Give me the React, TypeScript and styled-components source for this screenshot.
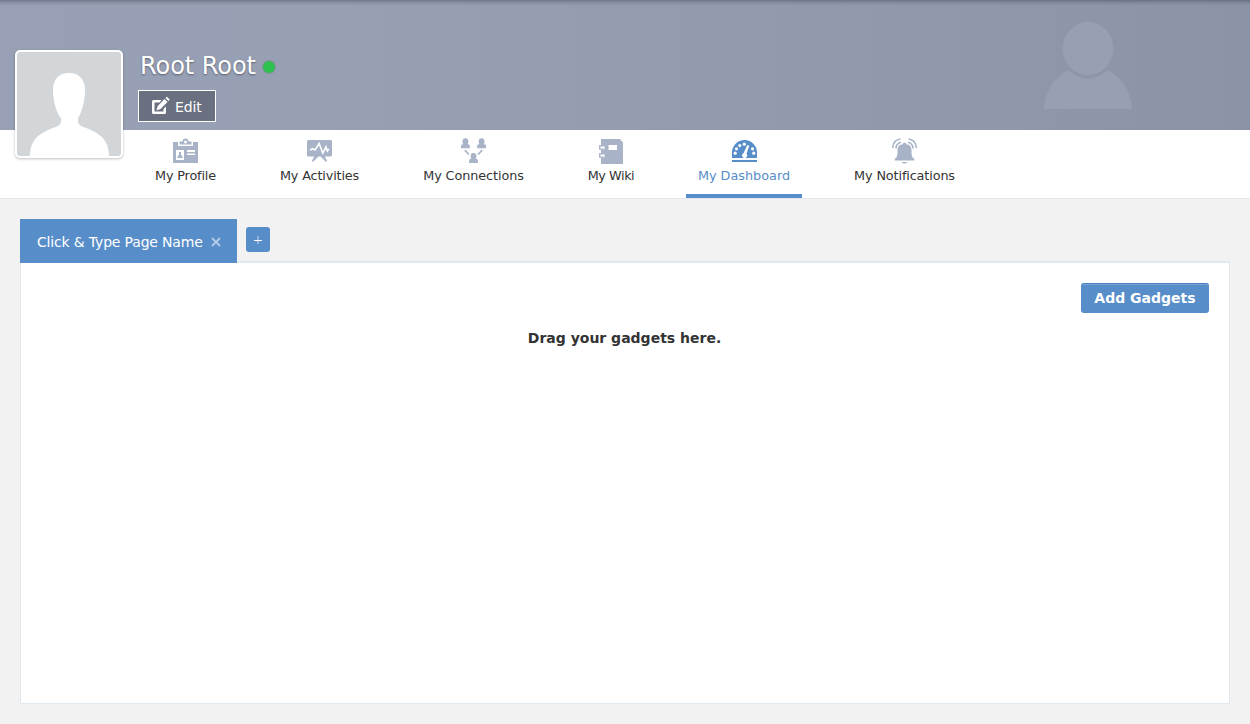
import React from "react";
import styled, { createGlobalStyle } from "styled-components";

const GlobalStyle = createGlobalStyle`
  *, *::before, *::after { box-sizing: border-box; }
  body {
    margin: 0;
    background: #f2f2f2;
    color: #333;
    font-family: "DejaVu Sans", sans-serif;
    font-size: 13px;
  }
`;

const Page = styled.div`
  height: 724px;
  display: flex;
  flex-direction: column;
  overflow: hidden;
`;

const Banner = styled.header`
  position: relative;
  height: 130px;
  flex: none;
  display: flex;
  padding: 50px 0 0 15px;
  background:
    linear-gradient(180deg, rgba(60, 65, 80, 0.42) 0, rgba(60, 65, 80, 0.12) 3px, rgba(60, 65, 80, 0) 6px),
    linear-gradient(90deg, #98a0b6 0%, #979fb3 28%, #9098ac 72%, #8b93a7 100%);
`;

const Watermark = styled.svg`
  position: absolute;
  left: 1043px;
  top: 20px;
`;

const Avatar = styled.div`
  position: relative;
  z-index: 1;
  flex: none;
  width: 108px;
  height: 108px;
  border: 2px solid #fff;
  border-radius: 5px;
  background: #d2d6d9;
  overflow: hidden;
  box-shadow: 0 1px 3px rgba(0, 0, 0, 0.25);
  svg { display: block; }
`;

const Identity = styled.div`
  display: flex;
  flex-direction: column;
  align-items: flex-start;
  margin-left: 15px;
`;

const NameRow = styled.div`
  display: flex;
  align-items: center;
  height: 30px;
  padding: 2px 0 0 2px;
  color: #fff;
  font-size: 24px;
  line-height: 30px;
  letter-spacing: -0.05px;
  text-shadow: 0 1px 2px rgba(0, 0, 0, 0.4);
`;

const Status = styled.span`
  width: 12px;
  height: 12px;
  margin: 1px 0 0 7px;
  border-radius: 50%;
  background: #2fc14e;
  box-shadow: 0 0 2px rgba(0, 0, 0, 0.3);
`;

const EditButton = styled.button`
  display: flex;
  align-items: center;
  width: 78px;
  height: 32px;
  margin-top: 10px;
  padding: 2px 0 0 13px;
  border: 1px solid #fff;
  background: #6a7080;
  color: #fff;
  font: 14px/20px "DejaVu Sans", sans-serif;
  letter-spacing: -0.1px;
  svg { margin: -4px 4px 0 0; }
`;

const Nav = styled.nav`
  flex: none;
  display: flex;
  gap: 40px;
  height: 69px;
  padding-left: 143px;
  background: #fff;
  border-bottom: 1px solid #e1e8ee;
`;

const NavItem = styled.a<{ $active?: boolean; $width: number; $tracking: number }>`
  display: flex;
  flex-direction: column;
  align-items: center;
  width: ${(p) => p.$width}px;
  height: 68px;
  padding-top: 8px;
  border-bottom: 4px solid ${(p) => (p.$active ? "#578dc9" : "transparent")};
  color: ${(p) => (p.$active ? "#578dc9" : "#333")};
  font-size: 12.8px;
  line-height: 20px;
  letter-spacing: ${(p) => p.$tracking}px;
  white-space: nowrap;
  svg {
    display: block;
    flex: none;
    margin: 0 0 2px ${(p) => (p.$width % 2 ? 0 : 1)}px;
    color: ${(p) => (p.$active ? "#578dc9" : "#a8b3c8")};
  }
`;

const Workspace = styled.main`
  flex: 1;
  display: flex;
  flex-direction: column;
  padding: 20px;
`;

const TabBar = styled.div`
  display: flex;
  height: 44px;
  border-bottom: 2px solid #e1e8ee;
`;

const Tab = styled.div`
  display: flex;
  align-items: center;
  width: 217px;
  height: 44px;
  padding: 2px 0 0 17px;
  background: #578dc9;
  color: #fff;
  font-size: 14px;
  letter-spacing: -0.17px;
  white-space: nowrap;
  svg { flex: none; margin-left: 8px; }
`;

const AddTab = styled.button`
  display: flex;
  align-items: center;
  justify-content: center;
  width: 24px;
  height: 25px;
  margin: 8px 0 0 9px;
  padding: 0;
  border: 0;
  border-radius: 3px;
  background: #578dc9;
`;

const Board = styled.section`
  flex: 1;
  display: flex;
  flex-direction: column;
  padding: 20px 20px 0;
  border: 1px solid #e1e8ee;
  border-top: 0;
  background: #fff;
`;

const AddGadgets = styled.button`
  align-self: flex-end;
  width: 128px;
  height: 30px;
  padding: 0 0 1px;
  border: 0;
  border-top: 1px solid #4a82c1;
  border-radius: 3px;
  background: #578dc9;
  box-shadow: inset 0 1px 0 #76a3d5;
  color: #fff;
  font: bold 14px/28px "DejaVu Sans", sans-serif;
`;

const EmptyHint = styled.p`
  margin: 15px 1px 0 0;
  font-size: 14px;
  font-weight: bold;
  line-height: 20px;
  text-align: center;
`;

const Icon = ({ children }: { children: React.ReactNode }) => (
  <svg width="25" height="26" viewBox="0.5 0 25 26" fill="currentColor">{children}</svg>
);

const ProfileIcon = () => (
  <Icon>
    <path d="M0.5 4H5.5V8H20.5V4H25.5V25H0.5Z" />
    <path d="M7 3.5H10A3 3 0 0 1 16 3.5H19V6.5H7Z" />
    <circle cx="13" cy="3.9" r="1.5" fill="#fff" />
    <path d="M3.5 12H11.5V22H3.5ZM14.5 12H22.5V14H14.5ZM14.5 15.5H22.5V17H14.5Z" fill="#fff" />
    <path d="M6.5 14H8.5V17L10 18V20H5V18L6.5 17Z" />
  </Icon>
);

const ActivitiesIcon = () => (
  <Icon>
    <path d="M2 2H24Q25.5 2 25.5 3.5V17.5Q25.5 18.5 24 18.5H18.3L20.5 22.5L19.6 24L14 18.5H12L6.4 24L5.5 22.5L7.7 18.5H2Q0.5 18.5 0.5 17.5V3.5Q0.5 2 2 2Z" />
    <path d="M3.5 12L6 10.7L8.5 12L12.6 5.5L16.3 15L19.5 8.8L20.8 13L22.4 11" fill="none" stroke="#fff" strokeWidth="1.6" />
  </Icon>
);

const Person = ({ x, y }: { x: number; y: number }) => (
  <g transform={`translate(${x} ${y})`}>
    <ellipse cx="4.4" cy="3.2" rx="2.9" ry="3.2" />
    <path d="M2.6 4H6.2V5.6L8 6.2Q8.8 6.6 8.8 7.6V10H0V7.6Q0 6.6 0.8 6.2L2.6 5.6Z" />
  </g>
);

const ConnectionsIcon = () => (
  <Icon>
    <Person x={0.5} y={0.3} />
    <Person x={16.7} y={0.3} />
    <Person x={8.6} y={15} />
    <path d="M4.3 12.2L8.4 16.5M21.7 12.2L17.6 16.5" fill="none" stroke="currentColor" strokeWidth="1.7" />
  </Icon>
);

const WikiIcon = () => (
  <Icon>
    <path d="M2.5 1H21.5L24.5 4.5V26H2.5V19.5H6V16H2.5V11.5H6V8H2.5Z" />
    <path d="M5 8H1.2V11H5M5 16H1.2V19H5" fill="none" stroke="currentColor" strokeWidth="1.5" />
    <path d="M2 8.8H5V10.2H2ZM2 16.8H5V18.2H2ZM10 7H18.5V12H10Z" fill="#fff" />
  </Icon>
);

const DashboardIcon = () => (
  <Icon>
    <path d="M0.5 20V14.5A12.5 12.5 0 0 1 25.5 14.5V20ZM0.5 22H25.5V24H0.5Z" />
    <g fill="#fff">
      <circle cx="3.7" cy="15.2" r="1.6" />
      <circle cx="5" cy="10.8" r="1.6" />
      <circle cx="8.3" cy="7.6" r="1.6" />
      <circle cx="12.8" cy="6.2" r="1.6" />
      <circle cx="21" cy="10.8" r="1.6" />
      <circle cx="22.3" cy="15.2" r="1.6" />
      <path d="M15.8 7L17.8 7.7L15 15.8A2.5 2.5 0 1 1 12 15.2Z" />
    </g>
  </Icon>
);

const NotificationsIcon = () => (
  <Icon>
    <path d="M3.3 22.5V20.7Q6 19 6 16V12Q6 7 11.3 6.3A1.7 1.7 0 0 1 14.7 6.3Q20 7 20 12V16Q20 19 22.7 20.7V22.5ZM10 24H16Q15 25.5 13 25.5T10 24Z" />
    <path d="M1.2 10Q1.5 2 9 1M4.5 10.5Q4.6 5.5 9.4 4.2M24.8 10Q24.5 2 17 1M21.5 10.5Q21.4 5.5 16.6 4.2" fill="none" stroke="currentColor" strokeWidth="1.6" />
  </Icon>
);

const navItems = [
  { label: "My Profile", width: 85, tracking: -0.15, icon: <ProfileIcon /> },
  { label: "My Activities", width: 103, tracking: -0.14, icon: <ActivitiesIcon /> },
  { label: "My Connections", width: 125, tracking: -0.08, icon: <ConnectionsIcon /> },
  { label: "My Wiki", width: 70, tracking: -0.45, icon: <WikiIcon /> },
  { label: "My Dashboard", width: 116, tracking: 0, icon: <DashboardIcon />, active: true },
  { label: "My Notifications", width: 125, tracking: -0.12, icon: <NotificationsIcon /> },
];

export default function App() {
  return (
    <Page>
      <GlobalStyle />
      <Banner>
        <Watermark width="90" height="90" viewBox="0 0 90 90" fill="#999fb2">
          <ellipse cx="45" cy="28.5" rx="25.3" ry="26.5" />
          <path d="M25.5 50Q45 67 64.5 50C80 57 88 74 89 87Q89 89 87 89H3Q1 89 1 87C2 74 10 57 25.5 50Z" />
        </Watermark>
        <Avatar>
          <svg width="104" height="104" viewBox="0 0 104 104" fill="#fff">
            <path d="M52 21C62 21 68 27 68 38C68 50 64 62 61 66Q60 71 64 74C76 79 92 83 92 104H13C13 83 29 79 41 74Q45 71 44 66C40 62 36 50 36 38C36 27 42 21 52 21Z" />
          </svg>
        </Avatar>
        <Identity>
          <NameRow>Root Root<Status /></NameRow>
          <EditButton>
            <svg width="19" height="19" viewBox="0 0 19 19" fill="#fff">
              <path d="M9.5 4H1.5Q0 4 0 5.5V16.5Q0 18 1.5 18H12.5Q14 18 14 16.5V10.5L11.5 13V15.5H2.5V6.5H7.5Z" />
              <path d="M12.5 3L15.5 6L8.5 13L4.5 14.5L5.5 10.2ZM13.4 2.1L14.8 0.8L17.8 3.6L16.4 5.1Z" />
            </svg>
            Edit
          </EditButton>
        </Identity>
      </Banner>
      <Nav>
        {navItems.map((item) => (
          <NavItem key={item.label} $active={item.active} $width={item.width} $tracking={item.tracking}>
            {item.icon}
            {item.label}
          </NavItem>
        ))}
      </Nav>
      <Workspace>
        <TabBar>
          <Tab>
            Click &amp; Type Page Name
            <svg width="10" height="10" viewBox="0 0 10 10" stroke="#afcae8" strokeWidth="2">
              <path d="M1 1L9 9M9 1L1 9" />
            </svg>
          </Tab>
          <AddTab aria-label="Add page">
            <svg width="8" height="8" viewBox="0 0 8 8">
              <path d="M3 0H5V8H3Z" fill="#8fb4de" />
              <path d="M0 4H8V5H0Z" fill="#fff" />
            </svg>
          </AddTab>
        </TabBar>
        <Board>
          <AddGadgets>Add Gadgets</AddGadgets>
          <EmptyHint>Drag your gadgets here.</EmptyHint>
        </Board>
      </Workspace>
    </Page>
  );
}
